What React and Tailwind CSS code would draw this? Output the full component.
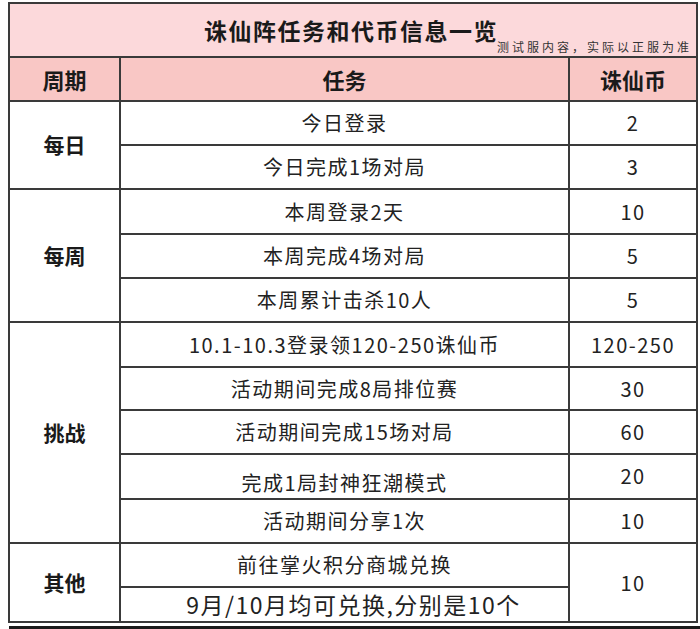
import React from "react";

const groups = [
  {
    period: "每日",
    rows: [
      { task: "今日登录", coin: "2", h: "h-[44px]" },
      { task: "今日完成1场对局", coin: "3", h: "h-[44px]" },
    ],
  },
  {
    period: "每周",
    rows: [
      { task: "本周登录2天", coin: "10", h: "h-[45px]" },
      { task: "本周完成4场对局", coin: "5", h: "h-[44px]" },
      { task: "本周累计击杀10人", coin: "5", h: "h-[44px]" },
    ],
  },
  {
    period: "挑战",
    rows: [
      { task: "10.1-10.3登录领120-250诛仙币", coin: "120-250", h: "h-[45px]" },
      { task: "活动期间完成8局排位赛", coin: "30", h: "h-[43px]" },
      { task: "活动期间完成15场对局", coin: "60", h: "h-[44px]" },
      { task: "完成1局封神狂潮模式", coin: "20", h: "h-[45px]", low: true },
      { task: "活动期间分享1次", coin: "10", h: "h-[44px]" },
    ],
  },
];

const cell = "border-2 border-[#3a3a3a] p-0 text-center align-middle";

export default function App() {
  return (
    <div className="w-[700px] h-[629px] bg-white overflow-hidden relative font-['Noto_Sans_CJK_SC','Noto_Sans',sans-serif] text-[#222]">
      <div className="pl-[8px] pt-[2px]">
        <table className="table-fixed border-collapse w-[688px]">
          <colgroup>
            <col className="w-[111px]" />
            <col className="w-[449px]" />
            <col className="w-[128px]" />
          </colgroup>
          <tbody>
            <tr className="h-[54px] bg-[#fcd9db]">
              <td colSpan={3} className={cell}>
                <div className="relative h-[50px] overflow-hidden flex items-center justify-center">
                  <span className="text-[23px] font-bold tracking-[1.5px] text-[#1a1a1a] pr-[4px]">
                    诛仙阵任务和代币信息一览
                  </span>
                  <span className="absolute left-[487px] top-[33px] text-[12px] tracking-[3px] whitespace-nowrap text-[#333]">
                    测试服内容，实际以正服为准
                  </span>
                </div>
              </td>
            </tr>
            <tr className="h-[44px] bg-[#f9c7c5] text-[22px] font-bold text-[#1a1a1a]">
              <td className={cell}>周期</td>
              <td className={cell}>任务</td>
              <td className={cell}>诛仙币</td>
            </tr>
            {groups.map((g) =>
              g.rows.map((r, i) => (
                <tr key={g.period + i} className={r.h + " text-[20px] tracking-[1.5px]"}>
                  {i === 0 && (
                    <td rowSpan={g.rows.length} className={cell + " font-bold text-[21px] tracking-normal text-[#1a1a1a]"}>
                      {g.period}
                    </td>
                  )}
                  <td className={cell}>
                    <div className={r.low ? "pt-[12px]" : ""}>{r.task}</div>
                  </td>
                  <td className={cell}>
                    <div className={r.low ? "pb-[2px]" : ""}>{r.coin}</div>
                  </td>
                </tr>
              ))
            )}
            <tr className="h-[44px] text-[20px] tracking-[1.5px]">
              <td rowSpan={2} className={cell + " font-bold text-[21px] tracking-normal text-[#1a1a1a]"}>
                其他
              </td>
              <td className={cell}>前往掌火积分商城兑换</td>
              <td rowSpan={2} className={cell}>
                10
              </td>
            </tr>
            <tr className="h-[35px]">
              <td className={cell + " text-[23px] tracking-[1.5px] leading-none whitespace-nowrap pl-[18px]"}>
                9月/10月均可兑换,分别是10个
              </td>
            </tr>
          </tbody>
        </table>
      </div>
      <div className="absolute left-[9px] right-0 bottom-0 h-[3px] bg-[#1a1a1a]" />
    </div>
  );
}
